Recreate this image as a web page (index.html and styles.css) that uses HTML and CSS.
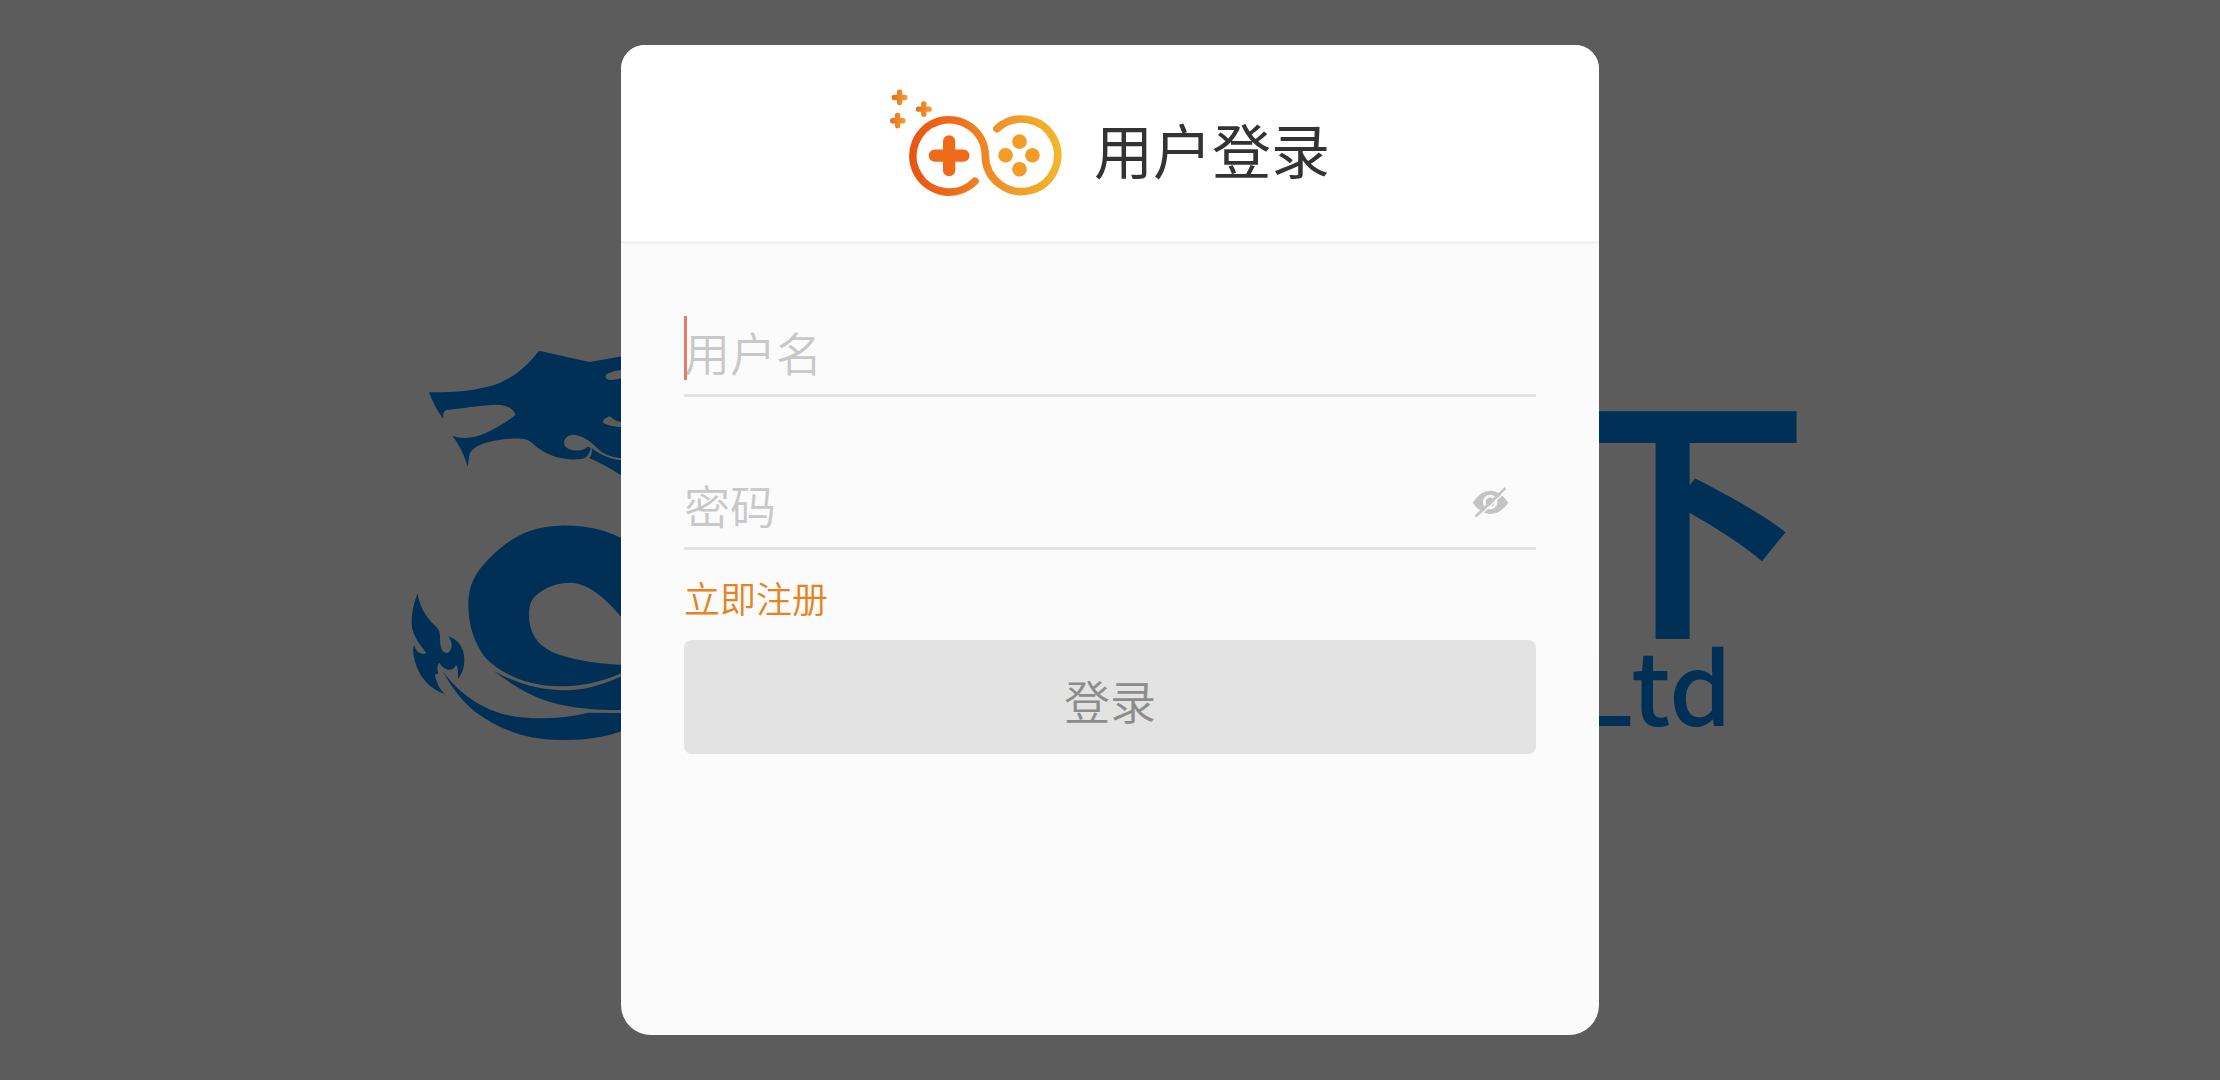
FILE: index.html
```html
<!DOCTYPE html>
<html lang="zh-CN">
<head>
    <meta charset="UTF-8">
    <meta name="viewport" content="width=device-width, initial-scale=1.0">
    <title>用户登录</title>
    <link rel="stylesheet" href="styles.css">
</head>
<body>
    <!-- Splash logo behind the dialog -->
    <svg class="splash" viewBox="0 0 2220 1080" aria-hidden="true">
        <!-- dragon head -->
        <g transform="translate(400 330) scale(.3333)">
            <path fill-rule="evenodd" d="M87 187C160 188 225 182 285 164C340 145 384 105 417 62L568 96L720 70V470L662 435C630 415 596 396 562 382C525 395 465 390 420 358C400 344 392 328 366 326C310 324 225 335 209 372C206 382 206 397 203 409C193 377 178 343 157 318C185 327 222 326 255 310C288 296 320 275 347 255C342 238 325 228 300 225C260 222 180 238 140 240C128 244 129 254 130 267C113 244 98 217 87 187Z"/>
            <path class="cut" d="M720 118C680 116 640 120 620 132C614 140 618 149 632 150C655 149 680 142 720 136ZM720 277C690 279 655 278 645 270C632 262 630 255 620 263C606 268 606 278 618 283C640 293 680 293 720 292ZM720 382C680 386 640 388 605 366C580 344 560 318 520 314C495 315 488 336 495 348C505 362 535 366 555 356C560 350 568 350 572 354C570 370 563 378 552 386L566 386C576 376 577 364 575 355C610 380 640 394 720 395Z"/>
        </g>
        <!-- dragon body and tail -->
        <g transform="translate(400 510) scale(.3333)">
            <path fill-rule="evenodd" d="M720 120C650 65 570 45 480 47C385 49 325 88 268 145C225 190 205 225 205 285C205 350 225 400 255 442C300 490 380 528 480 529C560 529 620 512 720 465ZM720 466C600 464 520 452 455 425C407 402 387 365 387 312C388 278 397 263 418 248C445 228 475 219 510 218C570 220 625 265 720 390Z"/>
            <path d="M280 482C350 522 420 540 490 541C570 541 620 520 720 475V600C600 602 520 597 450 576C380 553 330 520 280 482Z"/>
            <path d="M127 482C170 540 220 582 300 610C380 632 480 629 565 608L720 610V640C640 680 570 691 480 690C380 690 300 660 225 605C180 568 152 525 127 482Z"/>
            <path d="M53 250C58 295 85 330 110 352C125 370 118 385 122 407C126 428 141 434 149 424C160 408 155 395 145 379C175 388 193 415 193 448C193 475 187 490 174 507C173 490 176 475 168 465C160 485 135 485 118 458C110 465 112 478 115 492C104 490 103 497 110 512C114 528 122 540 135 553C95 538 65 510 50 470C40 440 37 422 42 403C47 425 62 437 79 429C65 410 45 388 37 358C31 325 39 285 53 250Z"/>
        </g>
        <text class="splash-name" x="1678" y="616" text-anchor="middle">下</text>
        <text class="splash-sub" x="1732" y="726" text-anchor="end">Ltd</text>
    </svg>

    <main class="card">
        <header class="card-header">
            <svg class="logo" viewBox="60 58 518 324" aria-hidden="true">
                <defs>
                    <linearGradient id="orange" gradientUnits="userSpaceOnUse" x1="118" y1="0" x2="576" y2="0">
                        <stop offset="0" stop-color="#e85412"/>
                        <stop offset=".3" stop-color="#f06c1c"/>
                        <stop offset=".6" stop-color="#f09428"/>
                        <stop offset="1" stop-color="#f3b72c"/>
                    </linearGradient>
                    <linearGradient id="spark" x1="0" y1="0" x2="1" y2="0">
                        <stop offset="0" stop-color="#e56a25"/>
                        <stop offset="1" stop-color="#f3a32c"/>
                    </linearGradient>
                </defs>
                <path class="ring" d="M316 335A109 109 0 1 1 347 258A109 109 0 1 0 382 177"/>
                <path class="pad" d="M238 215V302M195 258H281"/>
                <g fill="#f39c28">
                    <circle cx="450" cy="216" r="22"/>
                    <circle cx="408" cy="257" r="22"/>
                    <circle cx="489" cy="257" r="22"/>
                    <circle cx="450" cy="299" r="22"/>
                </g>
                <path fill="url(#spark)" d="M81 66Q81 59 89 59T97 66V75H106Q113 75 113 83T106 91H97V99Q97 106 89 106T81 99V91H72Q65 91 65 83T72 75H81Z"/>
                <path fill="url(#spark)" d="M154 101Q154 94 162 94T170 101V110H179Q186 110 186 118T179 126H170V134Q170 141 162 141T154 134V126H145Q138 126 138 118T145 110H154Z"/>
                <path fill="url(#spark)" d="M75 136Q75 129 83 129T91 136V145H100Q107 145 107 153T100 161H91V169Q91 176 83 176T75 169V161H67Q60 161 60 153T67 145H75Z"/>
            </svg>
            <h1>用户登录</h1>
        </header>

        <form class="login-form">
            <div class="field">
                <input type="text" id="username" aria-label="用户名" placeholder="用户名">
                <span class="caret"></span>
            </div>
            <div class="field">
                <input type="password" id="password" aria-label="密码" placeholder="密码">
                <button type="button" class="eye" aria-label="显示密码">
                    <svg viewBox="0 0 112 96">
                        <path fill="#c4c4c4" d="M2 50Q26 14 56 14T110 50Q86 84 56 84T2 50Z"/>
                        <circle cx="55" cy="48" r="18" fill="#c4c4c4" stroke="#fbfbfb" stroke-width="8"/>
                        <path stroke="#fbfbfb" stroke-width="4" d="M22 91L105 13"/>
                        <path stroke="#c4c4c4" stroke-width="8" d="M11 92L101 6"/>
                    </svg>
                </button>
            </div>
            <a class="register" href="#">立即注册</a>
            <button type="submit" class="submit" disabled>登录</button>
        </form>
    </main>
</body>
</html>
```
FILE: styles.css
```css
* {
    box-sizing: border-box;
}
body {
    margin: 0;
    min-height: 100vh;
    padding: 45px;
    display: flex;
    justify-content: center;
    background-color: #5c5c5c;
    font-family: "Noto Sans CJK SC", sans-serif;
}

/* backdrop */
.splash {
    position: absolute;
    inset: 0;
    width: 100%;
    height: 100%;
    fill: #003056;
}
.splash .cut {
    fill: #5c5c5c;
}
.splash-name {
    font-size: 264px;
    font-weight: 700;
}
.splash-sub {
    font-size: 100px;
    font-weight: 500;
}

/* dialog */
.card {
    position: relative;
    width: 100%;
    max-width: 978px;
    display: flex;
    flex-direction: column;
    background-color: #fbfbfb;
    border-radius: 24px 24px 30px 30px;
    overflow: hidden;
}
.card-header {
    display: flex;
    justify-content: center;
    align-items: center;
    gap: 32px;
    padding: 44px 0;
    background-color: #fff;
    border-bottom: 3px solid #f3f3f3;
}
.logo {
    width: 172px;
    height: 108px;
}
.ring {
    fill: none;
    stroke: url(#orange);
    stroke-width: 23;
    stroke-linecap: round;
}
.pad {
    stroke: #ef6a1a;
    stroke-width: 37;
    stroke-linecap: round;
}
h1 {
    margin: 0;
    padding-top: 12px;
    font-size: 59px;
    font-weight: 400;
    line-height: 88px;
    color: #333;
}

/* form */
.login-form {
    display: flex;
    flex-direction: column;
    padding: 63px;
}
.field {
    position: relative;
    display: flex;
    align-items: center;
    height: 90px;
    border-bottom: 3px solid #e3e3e3;
}
.field + .field {
    margin-top: 63px;
    padding-right: 27px;
}
.field input {
    flex: 1;
    min-width: 0;
    padding: 0;
    border: none;
    outline: none;
    background: none;
    font-family: inherit;
    font-size: 46px;
    font-weight: 350;
    color: #333;
}
.field input::placeholder {
    color: #c8c8c8;
}
.caret {
    position: absolute;
    left: 0;
    top: 9px;
    width: 3px;
    height: 64px;
    background-color: #e07f63;
}
.eye {
    padding: 0 0 4px;
    border: none;
    background: none;
    cursor: pointer;
}
.eye svg {
    display: block;
    width: 37px;
    height: 32px;
}
.register {
    align-self: flex-start;
    margin: 22px 0 18px;
    font-size: 36px;
    font-weight: 350;
    line-height: 50px;
    color: #e8821e;
    text-decoration: none;
}
.submit {
    height: 114px;
    padding: 4px 0 0;
    border: none;
    border-radius: 8px;
    background-color: #e3e3e3;
    font-family: inherit;
    font-size: 46px;
    font-weight: 350;
    color: #8c8c8c;
}
```
